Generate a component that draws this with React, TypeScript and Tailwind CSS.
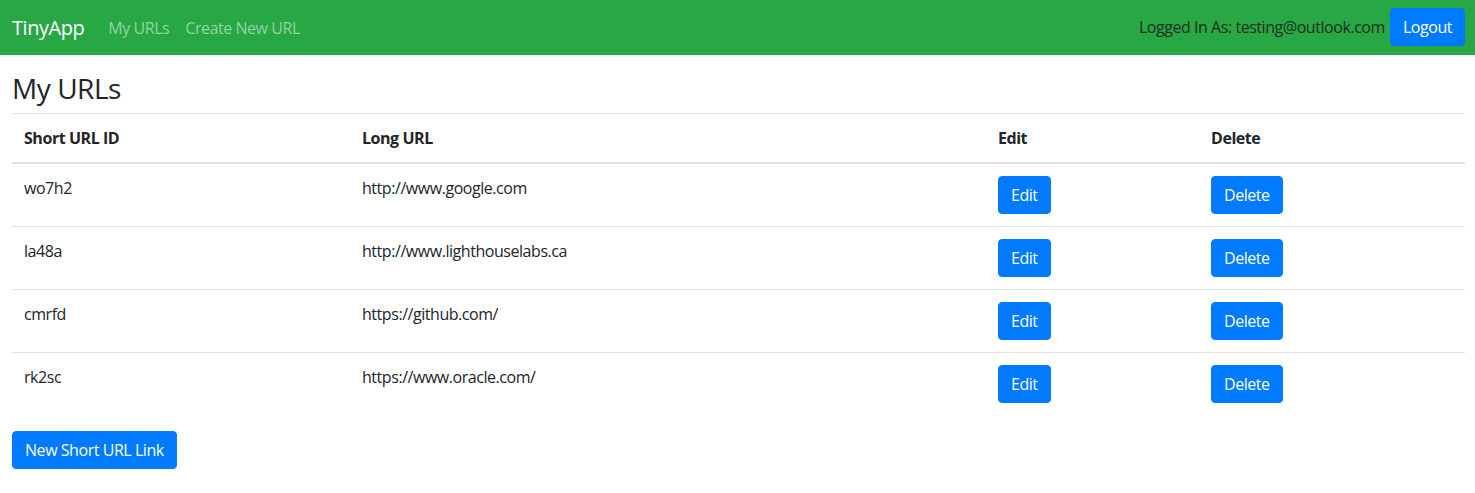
import React from "react";

interface UrlRow {
  id: string;
  longUrl: string;
}

const urls: UrlRow[] = [
  { id: "wo7h2", longUrl: "http://www.google.com" },
  { id: "la48a", longUrl: "http://www.lighthouselabs.ca" },
  { id: "cmrfd", longUrl: "https://github.com/" },
  { id: "rk2sc", longUrl: "https://www.oracle.com/" },
];

const btn =
  "bg-[#007bff] text-white text-[16px] leading-[24px] px-3 py-[6px] rounded-[4px] border border-[#007bff]";

const App: React.FC = () => {
  return (
    <div
      className="min-h-screen bg-white text-[#212529] text-[16px] leading-[24px] tracking-[-0.45px]"
      style={{ fontFamily: '"Open Sans", "Noto Sans", sans-serif' }}
    >
      <nav className="h-[55px] bg-[#28a745] flex items-center justify-between pl-3 pr-[10px]">
        <div className="flex items-center">
          <a href="#" className="text-white text-[20px] leading-[30px] mr-4">
            TinyApp
          </a>
          <div className="flex items-center">
            <a href="#" className="text-[#93d3a2] px-2">
              My URLs
            </a>
            <a href="#" className="text-[#93d3a2] px-2">
              Create New URL
            </a>
          </div>
        </div>
        <div className="flex items-center pb-[1px]">
          <span className="text-[#1e2e22] mr-[5px]">Logged In As: testing@outlook.com</span>
          <button className={btn}>Logout</button>
        </div>
      </nav>

      <main className="pl-3 pr-[10px] pt-4">
        <h3 className="text-[28px] leading-[34px] font-medium mb-[8px]">My URLs</h3>
        <table className="w-full border-collapse mb-4">
          <thead>
            <tr className="border-t border-[#dee2e6]">
              <th className="w-[338px] text-left font-bold p-3 border-b-2 border-[#dee2e6]">Short URL ID</th>
              <th className="w-[636px] text-left font-bold p-3 border-b-2 border-[#dee2e6]">Long URL</th>
              <th className="w-[213px] text-left font-bold p-3 border-b-2 border-[#dee2e6]">Edit</th>
              <th className="text-left font-bold p-3 border-b-2 border-[#dee2e6]">Delete</th>
            </tr>
          </thead>
          <tbody>
            {urls.map((u, i) => (
              <tr key={u.id} className={i > 0 ? "border-t border-[#dee2e6]" : ""}>
                <td className="p-3 align-top">{u.id}</td>
                <td className="p-3 align-top">{u.longUrl}</td>
                <td className="p-3 align-top">
                  <button className={btn}>Edit</button>
                </td>
                <td className="p-3 align-top">
                  <button className={btn}>Delete</button>
                </td>
              </tr>
            ))}
          </tbody>
        </table>
        <button className={btn}>New Short URL Link</button>
      </main>
    </div>
  );
};

export default App;
